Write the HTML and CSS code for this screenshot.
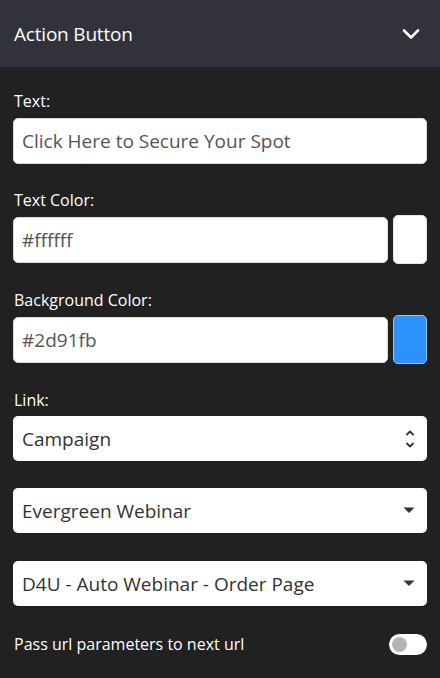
FILE: index.html
```html
<!DOCTYPE html>
<html>
<head>
<meta charset="utf-8">
<link rel="stylesheet" href="styles.css">
</head>
<body>
<div class="panel">
  <div class="header">
    <span class="title">Action Button</span>
    <svg class="chev" width="18" height="12" viewBox="0 0 18 12"><path d="M2 2.5 L9 9.5 L16 2.5" fill="none" stroke="#fff" stroke-width="2.6" stroke-linecap="round" stroke-linejoin="round"/></svg>
  </div>
  <div class="body">
    <div class="group">
      <div class="label">Text:</div>
      <div class="input full">Click Here to Secure Your Spot</div>
    </div>
    <div class="group">
      <div class="label tight">Text Color:</div>
      <div class="row">
        <div class="input grow">#ffffff</div>
        <div class="swatch white"></div>
      </div>
    </div>
    <div class="group">
      <div class="label tight">Background Color:</div>
      <div class="row">
        <div class="input grow">#2d91fb</div>
        <div class="swatch blue"></div>
      </div>
    </div>
    <div class="group">
      <div class="label link">Link:</div>
      <div class="select">
        <span>Campaign</span>
        <svg width="10" height="22" viewBox="0 0 10 22"><path d="M2 6.5 L5 3.5 L8 6.5" fill="none" stroke="#333" stroke-width="1.8" stroke-linecap="round" stroke-linejoin="round"/><path d="M2 15.5 L5 18.5 L8 15.5" fill="none" stroke="#333" stroke-width="1.8" stroke-linecap="round" stroke-linejoin="round"/></svg>
      </div>
    </div>
    <div class="select gap1">
      <span>Evergreen Webinar</span>
      <svg width="12" height="7" viewBox="0 0 12 7"><path d="M0.5 0.5 L11.5 0.5 L6 6 Z" fill="#333"/></svg>
    </div>
    <div class="select gap2">
      <span>D4U - Auto Webinar - Order Page</span>
      <svg width="12" height="7" viewBox="0 0 12 7"><path d="M0.5 0.5 L11.5 0.5 L6 6 Z" fill="#333"/></svg>
    </div>
    <div class="toggle-row">
      <span class="label plain">Pass url parameters to next url</span>
      <div class="toggle"><div class="knob"></div></div>
    </div>
  </div>
</div>
</body>
</html>
```
FILE: styles.css
```css
html, body {
  margin: 0;
  padding: 0;
  background: #212121;
  font-family: "Open Sans", "Noto Sans", sans-serif;
}
.panel {
  width: 440px;
  height: 678px;
  background: #212121;
  overflow: hidden;
}
.header {
  height: 67px;
  background: #31323a;
  display: flex;
  align-items: center;
  justify-content: space-between;
  padding: 0 20px 0 14px;
}
.title {
  color: #fff;
  font-size: 19px;
  letter-spacing: -0.2px;
}
.chev {
  display: block;
  margin-top: 1px;
}
.body {
  padding: 23px 13px 0 13px;
}
.group {
  margin-bottom: 25px;
}
.label {
  color: #fff;
  font-size: 16px;
  line-height: 22px;
  height: 22px;
  margin-bottom: 6px;
  padding-left: 1px;
}
.label.tight {
  margin-bottom: 4px;
}
.label.link {
  margin-bottom: 5px;
}
.label.plain {
  margin: 0;
}
.input {
  box-sizing: border-box;
  height: 46px;
  background: #fff;
  border-radius: 5px;
  border: 1px solid #d9d9d9;
  color: #555;
  font-size: 19px;
  display: flex;
  align-items: center;
  padding: 0 8px;
}
.row {
  display: flex;
  align-items: flex-start;
  gap: 5px;
  height: 49px;
}
.row .input {
  flex: 1;
  margin-top: 2px;
}
.swatch {
  box-sizing: border-box;
  width: 34px;
  height: 49px;
  border-radius: 5px;
}
.swatch.white {
  background: #fff;
  border: 1px solid #e6e6e6;
}
.swatch.blue {
  background: #2d91fb;
  border: 1px solid #9cc3ee;
}
.select {
  box-sizing: border-box;
  height: 45px;
  background: #fff;
  border-radius: 5px;
  color: #333;
  font-size: 19px;
  display: flex;
  align-items: center;
  justify-content: space-between;
  padding: 0 12px 0 9px;
}
.select svg {
  display: block;
}
.gap1 {
  margin-top: 27px;
}
.gap2 {
  margin-top: 28px;
}
.toggle-row {
  margin-top: 27px;
  height: 22px;
  display: flex;
  align-items: center;
  justify-content: space-between;
}
.toggle {
  width: 38px;
  height: 21px;
  background: #fff;
  border-radius: 11px;
  display: flex;
  align-items: center;
  padding-left: 3px;
  box-sizing: border-box;
}
.knob {
  width: 15px;
  height: 15px;
  border-radius: 50%;
  background: #b1b4bc;
}
```
